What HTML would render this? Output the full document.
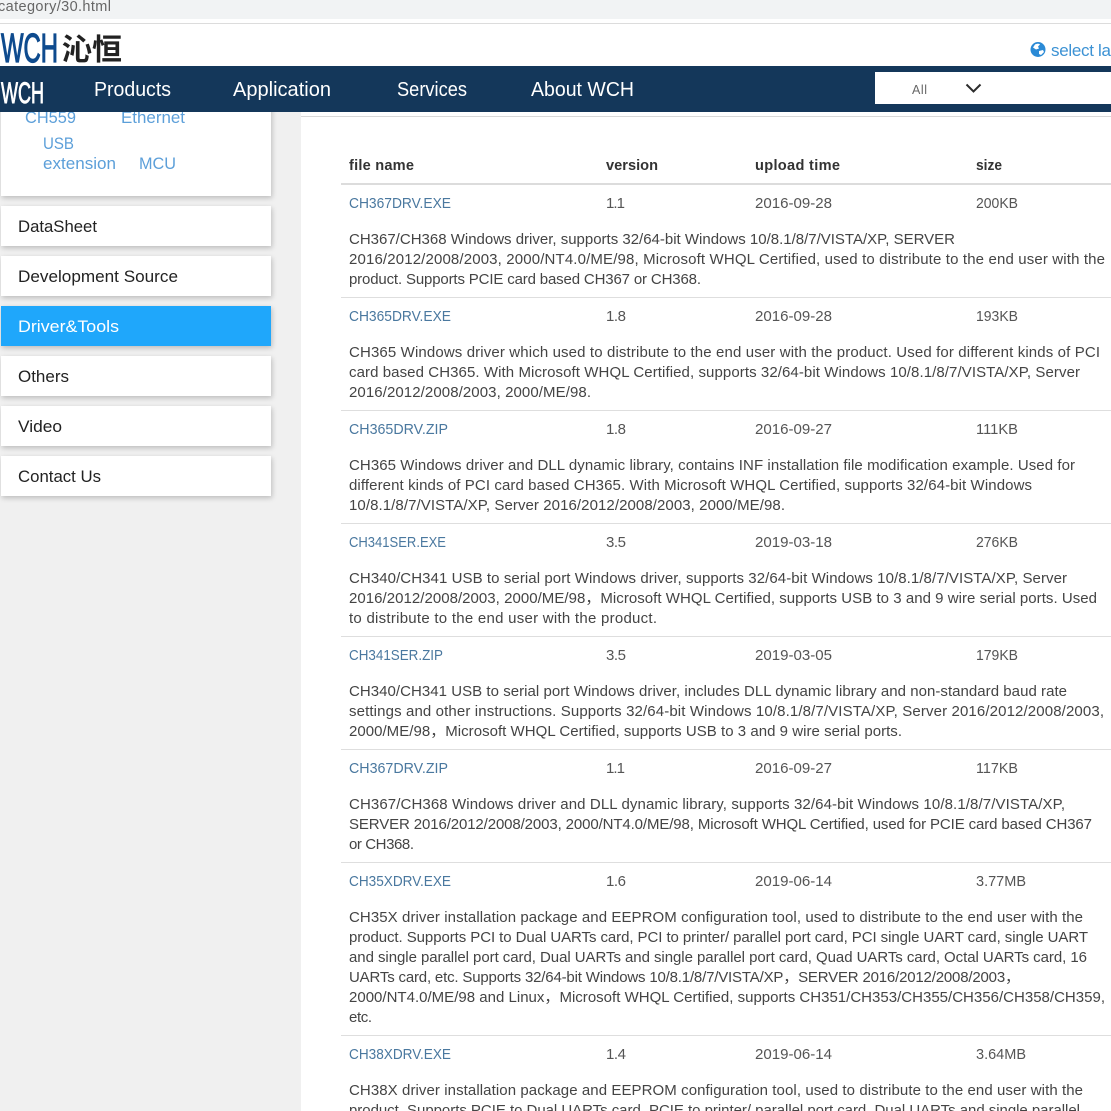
<!DOCTYPE html>
<html><head><meta charset="utf-8"><style>
html,body{margin:0;padding:0;width:1111px;height:1111px;overflow:hidden;background:#f0f0f0}
.c{position:absolute;left:1px;width:270px;background:#fff;box-shadow:1px 2px 5px rgba(0,0,0,.22)}
svg{position:absolute;left:0;top:0}
text{font-family:"Liberation Sans","Noto Sans CJK SC",sans-serif}
.d{font-size:15px;fill:#444}
.n{font-size:15px;fill:#4a789f}
.v{font-size:15px;fill:#555}
.h{font-size:14.6px;font-weight:bold;fill:#333}
.s{font-size:17px;fill:#222}
.l{font-size:17px;fill:#5c9fd9}
.m{font-size:20px;fill:#fff}
</style></head><body>
<div style="position:absolute;left:301px;top:112px;width:810px;height:999px;background:#fff"></div>
<div class="c" style="top:100px;height:96px"></div>
<div class="c" style="top:206px;height:40px"></div>
<div class="c" style="top:256px;height:40px"></div>
<div class="c" style="top:306px;height:40px;background:#1fa7fb"></div>
<div class="c" style="top:356px;height:40px"></div>
<div class="c" style="top:406px;height:40px"></div>
<div class="c" style="top:456px;height:40px"></div>
<svg width="1111" height="1111" viewBox="0 0 1111 1111" xmlns="http://www.w3.org/2000/svg">
<rect x="301" y="116" width="810" height="1" fill="#d8d8d8"/>
<text class="l" x="25" y="123" textLength="51" lengthAdjust="spacingAndGlyphs">CH559</text>
<text class="l" x="121" y="123" textLength="64" lengthAdjust="spacingAndGlyphs">Ethernet</text>
<text class="l" x="43" y="149" textLength="31" lengthAdjust="spacingAndGlyphs">USB</text>
<text class="l" x="43" y="169" textLength="73" lengthAdjust="spacingAndGlyphs">extension</text>
<text class="l" x="139" y="169" textLength="37" lengthAdjust="spacingAndGlyphs">MCU</text>
<text class="s" x="18" y="232" textLength="79" lengthAdjust="spacingAndGlyphs">DataSheet</text>
<text class="s" x="18" y="282" textLength="160" lengthAdjust="spacingAndGlyphs">Development Source</text>
<text class="s" x="18" y="332" textLength="101" lengthAdjust="spacingAndGlyphs" style="fill:#fff">Driver&amp;Tools</text>
<text class="s" x="18" y="382" textLength="51" lengthAdjust="spacingAndGlyphs">Others</text>
<text class="s" x="18" y="432" textLength="44" lengthAdjust="spacingAndGlyphs">Video</text>
<text class="s" x="18" y="482" textLength="83" lengthAdjust="spacingAndGlyphs">Contact Us</text>

<rect x="0" y="0" width="1111" height="19" fill="#f1f3f4"/>
<rect x="0" y="19" width="1111" height="93" fill="#fff"/>
<rect x="0" y="23" width="1111" height="1" fill="#dcdcdc"/>
<text x="-2" y="11" textLength="113" style="font-size:14.5px;fill:#666">category/30.html</text>
<text x="1" y="62" textLength="57" lengthAdjust="spacingAndGlyphs" style="font-size:41px;fill:#0e4b8e;stroke:#0e4b8e;stroke-width:1.3">WCH</text>
<text x="62" y="60" textLength="60" style="font-size:30px;font-weight:bold;fill:#222;font-family:'Noto Sans CJK SC',sans-serif">沁恒</text>
<circle cx="1038" cy="49.500" r="7.500" fill="#2a8ad6"/>
<path d="M1035 44.500c2-1 4-1 5 0l-2 2 1 2-3 1-3-2zM1039 51l4-1 1 2-3 3-2-1z" fill="#fff"/>
<text x="1051" y="56" textLength="60" style="font-size:17px;fill:#3c92d4">select la</text>

<rect x="0" y="66" width="1111" height="46" fill="#14375a"/>
<text x="1" y="103" textLength="43" lengthAdjust="spacingAndGlyphs" style="font-size:30px;fill:#fff;stroke:#fff;stroke-width:.9">WCH</text>
<text class="m" x="94" y="96" textLength="77" lengthAdjust="spacingAndGlyphs">Products</text>
<text class="m" x="233" y="96" textLength="98" lengthAdjust="spacingAndGlyphs">Application</text>
<text class="m" x="397" y="96" textLength="70" lengthAdjust="spacingAndGlyphs">Services</text>
<text class="m" x="531" y="96" textLength="103" lengthAdjust="spacingAndGlyphs">About WCH</text>
<rect x="875" y="72" width="236" height="32" fill="#fff"/>
<text x="912" y="94" textLength="15" style="font-size:12.500px;fill:#666">All</text>
<path d="M966.500 84.500l7 7 7-7" fill="none" stroke="#2c2c2c" stroke-width="2"/>

<text class="h" x="349" y="170" textLength="65">file name</text>
<text class="h" x="606" y="170" textLength="52">version</text>
<text class="h" x="755" y="170" textLength="85">upload time</text>
<text class="h" x="976" y="170" textLength="26" lengthAdjust="spacingAndGlyphs">size</text>
<rect x="341" y="183" width="770" height="2" fill="#dcdcdc"/>

<text class="n" x="349" y="208" textLength="102" lengthAdjust="spacingAndGlyphs">CH367DRV.EXE</text>
<text class="v" x="606" y="208" textLength="19">1.1</text>
<text class="v" x="755" y="208" textLength="77" lengthAdjust="spacingAndGlyphs">2016-09-28</text>
<text class="v" x="976" y="208" textLength="42" lengthAdjust="spacingAndGlyphs">200KB</text>
<text class="d" x="349" y="244" textLength="606">CH367/CH368 Windows driver, supports 32/64-bit Windows 10/8.1/8/7/VISTA/XP, SERVER</text>
<text class="d" x="349" y="264" textLength="756">2016/2012/2008/2003, 2000/NT4.0/ME/98, Microsoft WHQL Certified, used to distribute to the end user with the</text>
<text class="d" x="349" y="284" textLength="352">product. Supports PCIE card based CH367 or CH368.</text>
<rect x="341" y="297" width="770" height="1" fill="#dedede"/>

<text class="n" x="349" y="321" textLength="102" lengthAdjust="spacingAndGlyphs">CH365DRV.EXE</text>
<text class="v" x="606" y="321" textLength="20">1.8</text>
<text class="v" x="755" y="321" textLength="77" lengthAdjust="spacingAndGlyphs">2016-09-28</text>
<text class="v" x="976" y="321" textLength="42" lengthAdjust="spacingAndGlyphs">193KB</text>
<text class="d" x="349" y="357" textLength="751">CH365 Windows driver which used to distribute to the end user with the product. Used for different kinds of PCI</text>
<text class="d" x="349" y="377" textLength="731">card based CH365. With Microsoft WHQL Certified, supports 32/64-bit Windows 10/8.1/8/7/VISTA/XP, Server</text>
<text class="d" x="349" y="397" textLength="242">2016/2012/2008/2003, 2000/ME/98.</text>
<rect x="341" y="410" width="770" height="1" fill="#dedede"/>

<text class="n" x="349" y="434" textLength="99" lengthAdjust="spacingAndGlyphs">CH365DRV.ZIP</text>
<text class="v" x="606" y="434" textLength="20">1.8</text>
<text class="v" x="755" y="434" textLength="77" lengthAdjust="spacingAndGlyphs">2016-09-27</text>
<text class="v" x="976" y="434" textLength="42" lengthAdjust="spacingAndGlyphs">111KB</text>
<text class="d" x="349" y="470" textLength="726">CH365 Windows driver and DLL dynamic library, contains INF installation file modification example. Used for</text>
<text class="d" x="349" y="490" textLength="683">different kinds of PCI card based CH365. With Microsoft WHQL Certified, supports 32/64-bit Windows</text>
<text class="d" x="349" y="510" textLength="436">10/8.1/8/7/VISTA/XP, Server 2016/2012/2008/2003, 2000/ME/98.</text>
<rect x="341" y="523" width="770" height="1" fill="#dedede"/>

<text class="n" x="349" y="547" textLength="97" lengthAdjust="spacingAndGlyphs">CH341SER.EXE</text>
<text class="v" x="606" y="547" textLength="20">3.5</text>
<text class="v" x="755" y="547" textLength="77" lengthAdjust="spacingAndGlyphs">2019-03-18</text>
<text class="v" x="976" y="547" textLength="42" lengthAdjust="spacingAndGlyphs">276KB</text>
<text class="d" x="349" y="583" textLength="718">CH340/CH341 USB to serial port Windows driver, supports 32/64-bit Windows 10/8.1/8/7/VISTA/XP, Server</text>
<text class="d" x="349" y="603" textLength="748">2016/2012/2008/2003, 2000/ME/98，Microsoft WHQL Certified, supports USB to 3 and 9 wire serial ports. Used</text>
<text class="d" x="349" y="623" textLength="308">to distribute to the end user with the product.</text>
<rect x="341" y="636" width="770" height="1" fill="#dedede"/>

<text class="n" x="349" y="660" textLength="94" lengthAdjust="spacingAndGlyphs">CH341SER.ZIP</text>
<text class="v" x="606" y="660" textLength="20">3.5</text>
<text class="v" x="755" y="660" textLength="77" lengthAdjust="spacingAndGlyphs">2019-03-05</text>
<text class="v" x="976" y="660" textLength="42" lengthAdjust="spacingAndGlyphs">179KB</text>
<text class="d" x="349" y="696" textLength="718">CH340/CH341 USB to serial port Windows driver, includes DLL dynamic library and non-standard baud rate</text>
<text class="d" x="349" y="716" textLength="755">settings and other instructions. Supports 32/64-bit Windows 10/8.1/8/7/VISTA/XP, Server 2016/2012/2008/2003,</text>
<text class="d" x="349" y="736" textLength="553">2000/ME/98，Microsoft WHQL Certified, supports USB to 3 and 9 wire serial ports.</text>
<rect x="341" y="749" width="770" height="1" fill="#dedede"/>

<text class="n" x="349" y="773" textLength="99" lengthAdjust="spacingAndGlyphs">CH367DRV.ZIP</text>
<text class="v" x="606" y="773" textLength="19">1.1</text>
<text class="v" x="755" y="773" textLength="77" lengthAdjust="spacingAndGlyphs">2016-09-27</text>
<text class="v" x="976" y="773" textLength="42" lengthAdjust="spacingAndGlyphs">117KB</text>
<text class="d" x="349" y="809" textLength="716">CH367/CH368 Windows driver and DLL dynamic library, supports 32/64-bit Windows 10/8.1/8/7/VISTA/XP,</text>
<text class="d" x="349" y="829" textLength="743">SERVER 2016/2012/2008/2003, 2000/NT4.0/ME/98, Microsoft WHQL Certified, used for PCIE card based CH367</text>
<text class="d" x="349" y="849" textLength="65">or CH368.</text>
<rect x="341" y="862" width="770" height="1" fill="#dedede"/>

<text class="n" x="349" y="886" textLength="102" lengthAdjust="spacingAndGlyphs">CH35XDRV.EXE</text>
<text class="v" x="606" y="886" textLength="20">1.6</text>
<text class="v" x="755" y="886" textLength="77" lengthAdjust="spacingAndGlyphs">2019-06-14</text>
<text class="v" x="976" y="886" textLength="50" lengthAdjust="spacingAndGlyphs">3.77MB</text>
<text class="d" x="349" y="922" textLength="734">CH35X driver installation package and EEPROM configuration tool, used to distribute to the end user with the</text>
<text class="d" x="349" y="942" textLength="739">product. Supports PCI to Dual UARTs card, PCI to printer/ parallel port card, PCI single UART card, single UART</text>
<text class="d" x="349" y="962" textLength="738">and single parallel port card, Dual UARTs and single parallel port card, Quad UARTs card, Octal UARTs card, 16</text>
<text class="d" x="349" y="982" textLength="671">UARTs card, etc. Supports 32/64-bit Windows 10/8.1/8/7/VISTA/XP，SERVER 2016/2012/2008/2003，</text>
<text class="d" x="349" y="1002" textLength="756">2000/NT4.0/ME/98 and Linux，Microsoft WHQL Certified, supports CH351/CH353/CH355/CH356/CH358/CH359,</text>
<text class="d" x="349" y="1022" textLength="23">etc.</text>
<rect x="341" y="1035" width="770" height="1" fill="#dedede"/>

<text class="n" x="349" y="1059" textLength="102" lengthAdjust="spacingAndGlyphs">CH38XDRV.EXE</text>
<text class="v" x="606" y="1059" textLength="20">1.4</text>
<text class="v" x="755" y="1059" textLength="77" lengthAdjust="spacingAndGlyphs">2019-06-14</text>
<text class="v" x="976" y="1059" textLength="50" lengthAdjust="spacingAndGlyphs">3.64MB</text>
<text class="d" x="349" y="1095" textLength="734">CH38X driver installation package and EEPROM configuration tool, used to distribute to the end user with the</text>
<text class="d" x="349" y="1115" textLength="731">product. Supports PCIE to Dual UARTs card, PCIE to printer/ parallel port card, Dual UARTs and single parallel</text>
</svg>
</body></html>
